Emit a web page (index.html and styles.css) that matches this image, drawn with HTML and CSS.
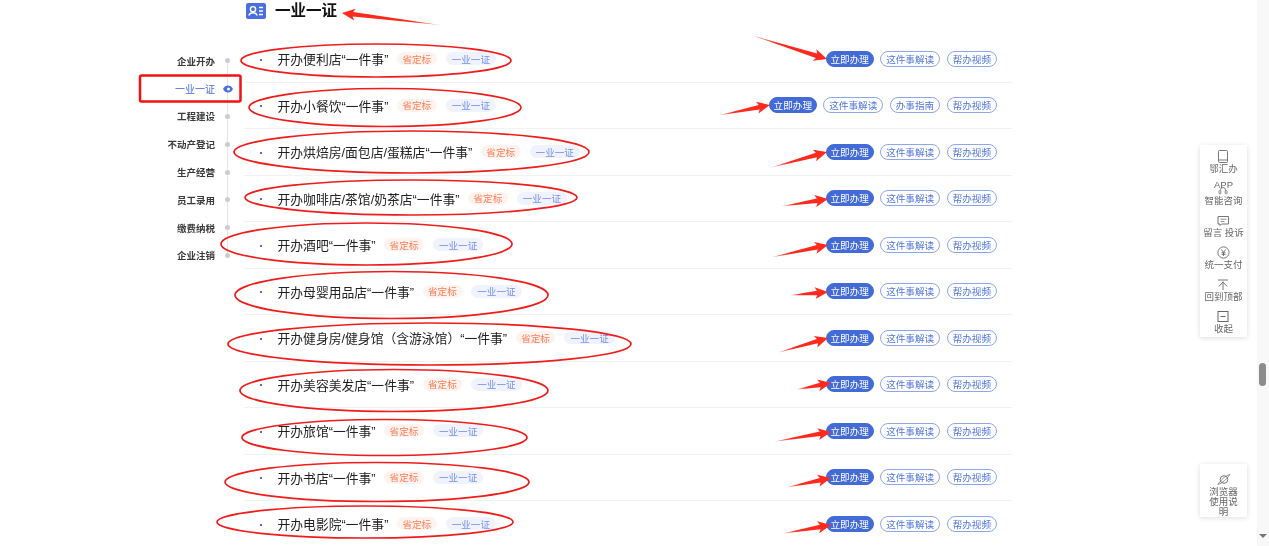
FILE: index.html
```html
<!DOCTYPE html>
<html lang="zh-CN">
<head>
<meta charset="utf-8">
<title>一业一证</title>
<link rel="stylesheet" href="styles.css">
</head>
<body>
<div class="page">
  <div class="content">
    <div class="layout">
      <header class="head">
        <svg class="head-icon" width="20" height="16" viewBox="0 0 20 16"><rect width="20" height="16" rx="2" fill="#4a6fdc"/><circle cx="7" cy="6.200" r="2.600" fill="none" stroke="#fff" stroke-width="1.400"/><path d="M2.800 12.600c.8-2 2.400-2.800 4.200-2.800s3.400.8 4.200 2.800" fill="none" stroke="#fff" stroke-width="1.400"/><path d="M13 4.500h4M13 8h4M13 11.500h4" stroke="#fff" stroke-width="1.400"/></svg>
        <h1 class="title">一业一证</h1>
      </header>
      <nav class="nav">
        <a class="nav-item"><span>企业开办</span><i class="dot"></i></a>
        <a class="nav-item active"><span>一业一证</span><svg class="eye" width="10" height="8" viewBox="0 0 10 8"><path d="M0 4c1.200-2.400 3-3.500 5-3.500S8.800 1.600 10 4C8.800 6.400 7 7.500 5 7.500S1.200 6.400 0 4z" fill="#4a6fdc"/><circle cx="5.500" cy="4" r="1.500" fill="#fff"/></svg></a>
        <a class="nav-item"><span>工程建设</span><i class="dot"></i></a>
        <a class="nav-item"><span>不动产登记</span><i class="dot"></i></a>
        <a class="nav-item"><span>生产经营</span><i class="dot"></i></a>
        <a class="nav-item"><span>员工录用</span><i class="dot"></i></a>
        <a class="nav-item"><span>缴费纳税</span><i class="dot"></i></a>
        <a class="nav-item"><span>企业注销</span><i class="dot"></i></a>
      </nav>
      <ul class="list">
        <li class="row"><span class="name">开办便利店“一件事”</span><span class="tag tag-o">省定标</span><span class="tag tag-b">一业一证</span><span class="btns"><a class="btn primary">立即办理</a><a class="btn">这件事解读</a><a class="btn">帮办视频</a></span></li>
        <li class="row"><span class="name">开办小餐饮“一件事”</span><span class="tag tag-o">省定标</span><span class="tag tag-b">一业一证</span><span class="btns"><a class="btn primary">立即办理</a><a class="btn">这件事解读</a><a class="btn">办事指南</a><a class="btn">帮办视频</a></span></li>
        <li class="row"><span class="name">开办烘焙房/面包店/蛋糕店“一件事”</span><span class="tag tag-o">省定标</span><span class="tag tag-b">一业一证</span><span class="btns"><a class="btn primary">立即办理</a><a class="btn">这件事解读</a><a class="btn">帮办视频</a></span></li>
        <li class="row"><span class="name">开办咖啡店/茶馆/奶茶店“一件事”</span><span class="tag tag-o">省定标</span><span class="tag tag-b">一业一证</span><span class="btns"><a class="btn primary">立即办理</a><a class="btn">这件事解读</a><a class="btn">帮办视频</a></span></li>
        <li class="row"><span class="name">开办酒吧“一件事”</span><span class="tag tag-o">省定标</span><span class="tag tag-b">一业一证</span><span class="btns"><a class="btn primary">立即办理</a><a class="btn">这件事解读</a><a class="btn">帮办视频</a></span></li>
        <li class="row"><span class="name">开办母婴用品店“一件事”</span><span class="tag tag-o">省定标</span><span class="tag tag-b">一业一证</span><span class="btns"><a class="btn primary">立即办理</a><a class="btn">这件事解读</a><a class="btn">帮办视频</a></span></li>
        <li class="row"><span class="name">开办健身房/健身馆（含游泳馆）“一件事”</span><span class="tag tag-o">省定标</span><span class="tag tag-b">一业一证</span><span class="btns"><a class="btn primary">立即办理</a><a class="btn">这件事解读</a><a class="btn">帮办视频</a></span></li>
        <li class="row"><span class="name">开办美容美发店“一件事”</span><span class="tag tag-o">省定标</span><span class="tag tag-b">一业一证</span><span class="btns"><a class="btn primary">立即办理</a><a class="btn">这件事解读</a><a class="btn">帮办视频</a></span></li>
        <li class="row"><span class="name">开办旅馆“一件事”</span><span class="tag tag-o">省定标</span><span class="tag tag-b">一业一证</span><span class="btns"><a class="btn primary">立即办理</a><a class="btn">这件事解读</a><a class="btn">帮办视频</a></span></li>
        <li class="row"><span class="name">开办书店“一件事”</span><span class="tag tag-o">省定标</span><span class="tag tag-b">一业一证</span><span class="btns"><a class="btn primary">立即办理</a><a class="btn">这件事解读</a><a class="btn">帮办视频</a></span></li>
        <li class="row"><span class="name">开办电影院“一件事”</span><span class="tag tag-o">省定标</span><span class="tag tag-b">一业一证</span><span class="btns"><a class="btn primary">立即办理</a><a class="btn">这件事解读</a><a class="btn">帮办视频</a></span></li>
      </ul>
    </div>
  </div>
  <div class="scrollbar"><div class="thumb"></div><div class="scroll-down"></div></div>
</div>

<aside class="float float-top">
  <a class="float-item"><svg width="12" height="13" viewBox="0 0 12 13"><rect x="1.500" y=".5" width="9" height="12" rx="1" fill="none" stroke="#777"/><path d="M1.500 10h9" stroke="#777"/></svg><span>鄂汇办</span></a>
  <a class="float-item"><span class="app">APP</span><svg width="12" height="13" viewBox="0 0 12 13"><path d="M3.500 8.500V8a2.500 2.500 0 0 1 5 0v.5" fill="none" stroke="#777" stroke-width=".9"/><rect x="2" y="8.500" width="1.800" height="3.500" rx=".8" fill="none" stroke="#777" stroke-width=".9"/><rect x="8.200" y="8.500" width="1.800" height="3.500" rx=".8" fill="none" stroke="#777" stroke-width=".9"/></svg><span>智能咨询</span></a>
  <a class="float-item"><svg width="12" height="13" viewBox="0 0 12 13"><path d="M1 2.500h10.500v7.500H4.500L3 11.500V10H1z" fill="none" stroke="#777"/><path d="M3.500 5.200h6M3.500 7.400h4" stroke="#777" stroke-width=".8"/></svg><span>留言 投诉</span></a>
  <a class="float-item"><svg width="13" height="13" viewBox="0 0 13 13"><circle cx="6.500" cy="6.500" r="5.600" fill="none" stroke="#777"/><path d="M4.500 3.500l2 3 2-3M6.500 6.500V10M4.500 6.800h4M4.500 8.400h4" fill="none" stroke="#666" stroke-width=".9"/></svg><span>统一支付</span></a>
  <a class="float-item"><svg width="12" height="13" viewBox="0 0 12 13"><path d="M1 2h10M6 3.500V12M6 4L1.800 8.500M6 4l4.200 4.500" fill="none" stroke="#777"/></svg><span>回到顶部</span></a>
  <a class="float-item"><svg width="12" height="13" viewBox="0 0 12 13"><rect x="1" y="1.500" width="10" height="10" fill="none" stroke="#666"/><path d="M3.500 6.500h5" stroke="#666"/></svg><span>收起</span></a>
</aside>

<aside class="float float-bottom">
  <svg width="14" height="13" viewBox="0 0 14 13"><ellipse cx="7" cy="6.500" rx="3.800" ry="3.800" fill="none" stroke="#777"/><path d="M.8 11.500C3 11 8.500 8 13 1.500 10.500 2 5.500 4.500.8 11.500z" fill="none" stroke="#777" stroke-width=".8"/></svg>
  <span class="float-text">浏览器使用说明</span>
</aside>

<svg class="marks" width="1269" height="546" viewBox="0 0 1269 546">
  <defs>
    <linearGradient id="fade" x1="0" x2="1" y1="0" y2="0"><stop offset="0" stop-color="#ff2a1e" stop-opacity=".45"/><stop offset=".3" stop-color="#ff2a1e"/></linearGradient>
  </defs>
  <rect class="box" x="140" y="75.500" width="100.500" height="26" rx="1.500"/>
  <g class="rings">
    <ellipse cx="376" cy="60.500" rx="135" ry="16.500"/>
    <ellipse cx="385" cy="107.500" rx="136" ry="19"/>
    <ellipse cx="411.500" cy="152" rx="177.500" ry="21"/>
    <ellipse cx="411" cy="197.500" rx="166" ry="17.500"/>
    <ellipse cx="366.500" cy="244" rx="145.500" ry="21"/>
    <ellipse cx="391.500" cy="295" rx="156.500" ry="23.500"/>
    <ellipse cx="429.500" cy="344" rx="201.500" ry="21"/>
    <ellipse cx="394" cy="390.500" rx="154" ry="21"/>
    <ellipse cx="384.500" cy="437.500" rx="142.500" ry="18"/>
    <ellipse cx="377" cy="482" rx="152" ry="19.500"/>
    <ellipse cx="365" cy="522" rx="148" ry="16"/>
  </g>
  <g class="arrows">
    <polygon transform="translate(342 13) rotate(187)" points="-99,0 -11,-2.300 -13,-6 0,0 -13,6 -11,2.300"/>
    <polygon transform="translate(827 59) rotate(17.500)" points="-78,0 -11,-2.300 -13,-6 0,0 -13,6 -11,2.300"/>
    <polygon transform="translate(770 105) rotate(-11.500)" points="-52,0 -11,-2.300 -13,-6 0,0 -13,6 -11,2.300"/>
    <polygon transform="translate(827 152) rotate(-15.500)" points="-58,0 -11,-2.300 -13,-6 0,0 -13,6 -11,2.300"/>
    <polygon transform="translate(828 199) rotate(-9)" points="-47,0 -11,-2.300 -13,-6 0,0 -13,6 -11,2.300"/>
    <polygon transform="translate(828 245) rotate(-12.300)" points="-58,0 -11,-2.300 -13,-6 0,0 -13,6 -11,2.300"/>
    <polygon transform="translate(828 292) rotate(-5)" points="-38,0 -11,-2.300 -13,-6 0,0 -13,6 -11,2.300"/>
    <polygon transform="translate(828 338) rotate(-16.300)" points="-52,0 -11,-2.300 -13,-6 0,0 -13,6 -11,2.300"/>
    <polygon transform="translate(831 383) rotate(-10.600)" points="-35,0 -11,-2.300 -13,-6 0,0 -13,6 -11,2.300"/>
    <polygon transform="translate(831 432) rotate(-9.500)" points="-57,0 -11,-2.300 -13,-6 0,0 -13,6 -11,2.300"/>
    <polygon transform="translate(831 478) rotate(-12)" points="-45,0 -11,-2.300 -13,-6 0,0 -13,6 -11,2.300"/>
    <polygon transform="translate(831 525) rotate(-10)" points="-49,0 -11,-2.300 -13,-6 0,0 -13,6 -11,2.300"/>
  </g>
</svg>
</body>
</html>
```
FILE: styles.css
```css
* { box-sizing: border-box; }
html, body { margin: 0; padding: 0; height: 100%; overflow: hidden; background: #fff; }
body {
  position: relative;
  font-family: "Liberation Sans", "Noto Sans CJK SC", sans-serif;
  color: #222;
  filter: blur(.3px);
}
a { text-decoration: none; color: inherit; }

.page { display: flex; height: 546px; overflow: hidden; }
.content { flex: 1; min-width: 0; }
.layout { display: grid; grid-template-columns: 244px 768px; grid-template-rows: 36px auto; }

.head { grid-column: 2; display: flex; align-items: flex-start; gap: 9px; padding: 3px 0 0 2px; }
.head-icon { display: block; }
.title { margin: 0; font-size: 15.500px; line-height: 16px; font-weight: 700; color: #111; }

.nav { grid-column: 1; position: relative; padding-top: 11px; }
.nav::before { content: ""; position: absolute; left: 227px; top: 25px; height: 194px; width: 1px; background: #e3e5e9; }
.nav-item { position: relative; display: flex; justify-content: flex-end; align-items: center; gap: 7px; height: 27.800px; padding-right: 12px; font-size: 9.500px; font-weight: 700; color: #3a3a3a; }
.nav-item.active { color: #4a6fdc; font-size: 10px; font-weight: 400; gap: 8px; padding-right: 11px; }
.dot { width: 10px; height: 5px; position: relative; }
.dot::after { content: ""; position: absolute; left: 2.500px; top: 0; width: 5px; height: 5px; border-radius: 50%; background: #c9cdd2; }
.eye { display: block; }

.list { grid-column: 2; margin: 0; padding: 0; list-style: none; }
.row { position: relative; display: flex; align-items: center; height: 46.500px; padding: 0 15px 0 33.500px; border-bottom: 1px solid #f1f2f4; }
.row::before { content: ""; position: absolute; left: 16px; top: 50%; width: 2px; height: 2px; background: #4a6fdc; }
.name { font-size: 12.800px; color: #222; white-space: nowrap; }
.tag { display: flex; align-items: center; height: 13px; border-radius: 7px; font-size: 9.600px; white-space: nowrap; }
.tag-o { margin-left: 8.500px; padding: 0 5.500px; background: #fff3ef; color: #ff7c55; }
.tag-b { margin-left: 9px; padding: 0 6px; background: #f0f3fe; color: #7190e8; }
.btns { margin-left: auto; display: flex; gap: 6.500px; }
.btn { display: flex; align-items: center; height: 16px; padding: 0 5px; border: 1px solid #8ea7ea; border-radius: 8px; font-size: 9.600px; color: #4f74dc; background: #fff; white-space: nowrap; }
.btn.primary { padding: 0 3.800px; border-color: #426bd8; background: #426bd8; color: #fff; }

.scrollbar { position: relative; width: 12px; flex: none; background: #f8f8f8; }
.thumb { position: absolute; left: 2px; top: 363px; width: 7px; height: 23px; border-radius: 4px; background: #8c8c8c; }
.scroll-down { position: absolute; left: 2px; top: 534px; width: 0; height: 0; border: 4px solid transparent; border-top: 4px solid #777; border-bottom: 0; }

.float { position: absolute; left: 1200px; width: 47px; display: flex; flex-direction: column; align-items: center; background: #fff; box-shadow: 0 1px 5px rgba(0, 0, 0, .14); color: #666; font-size: 9.500px; line-height: 11px; }
.float-top { top: 145px; height: 192px; padding-top: 5px; gap: 8px; }
.float-item { position: relative; display: flex; flex-direction: column; align-items: center; height: 24px; white-space: nowrap; }
.float-item svg { display: block; flex: none; }
.app { position: absolute; left: 50%; top: -3px; transform: translateX(-50%); }
.float-bottom { top: 464px; height: 53px; padding-top: 9px; }
.float-bottom svg { display: block; flex: none; margin-bottom: 1px; }
.float-text { width: 30px; text-align: center; line-height: 10px; }

.marks { position: absolute; left: 0; top: 0; pointer-events: none; }
.box { fill: none; stroke: #f31010; stroke-width: 2.500; }
.rings ellipse { fill: none; stroke: #f01c1c; stroke-width: 1.700; }
.arrows polygon { fill: url(#fade); }
```
